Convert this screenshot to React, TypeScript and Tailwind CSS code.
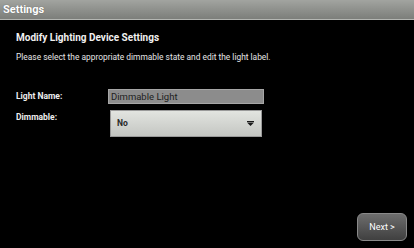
export default function App() {
  return (
    <main
      className="flex h-[248px] w-[414px] flex-col overflow-hidden bg-black text-white"
      style={{ fontFamily: 'Roboto, "Open Sans", sans-serif' }}
    >
      <header className="flex h-[20px] items-center border-b border-[#b4b6b2] bg-gradient-to-b from-[#a2a4a0] to-[#7c7e7a] px-[3px]">
        <h1 className="text-[11px] font-bold leading-none text-white [text-shadow:0_0_1px_#555]">Settings</h1>
      </header>

      <section className="flex flex-col px-4 pt-[11px]">
        <h2 className="text-[10px] font-bold leading-[14px] text-[#f0f0f0]">Modify Lighting Device Settings</h2>
        <p className="mt-[7px] text-[8.4px] leading-[11px] text-[#e6e6e6]">
          Please select the appropriate dimmable state and edit the light label.
        </p>

        <div className="mt-[26px] grid grid-cols-[92px_156px] gap-y-[6px]">
          <label className="flex items-center text-[8.5px] font-bold leading-none text-[#eeeeee]">Light Name:</label>
          <div className="flex h-[15px] items-center border border-[#a6a6a6] bg-[#8c8c8c] px-[2px] text-[9.5px] leading-none text-[#1e1e1e]">
            Dimmable Light
          </div>

          <label className="pt-[3px] text-[8.5px] font-bold leading-none text-[#eeeeee]">Dimmable:</label>
          <div className="ml-[2px] flex h-[27px] w-[152px] items-center justify-between border border-[#9a9a9a] bg-gradient-to-b from-[#e2e4e0] to-[#c4c6c2] pl-[6px] pr-[7px]">
            <span className="text-[8.5px] font-bold leading-none text-[#2a2a2a]">No</span>
            <svg width="7" height="5" viewBox="0 0 7 5">
              <rect x="0" y="0" width="7" height="1" fill="#1a1a1a" />
              <polygon points="0,1.5 7,1.5 3.5,5" fill="#1a1a1a" />
            </svg>
          </div>
        </div>
      </section>

      <footer className="mt-auto flex justify-end pb-[7px] pr-[7px]">
        <button className="flex h-[28px] w-[50px] items-center justify-center rounded-[6px] border border-[#8a8a8a] bg-gradient-to-b from-[#6e6e6e] to-[#404040] text-[9px] leading-none text-white">
          Next &gt;
        </button>
      </footer>
    </main>
  );
}
